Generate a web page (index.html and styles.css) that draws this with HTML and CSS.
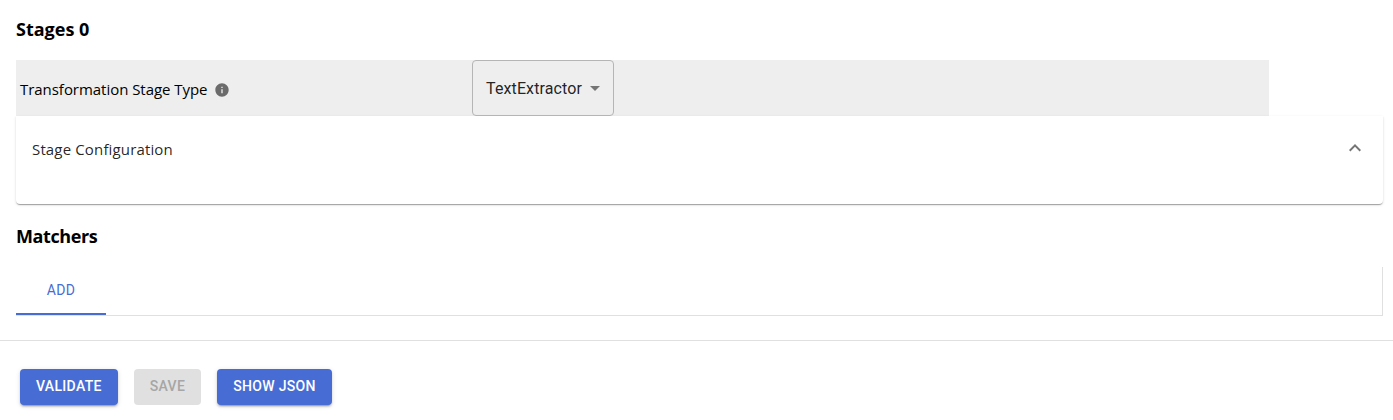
FILE: index.html
```html
<!doctype html>
<html lang="en">
    <head>
        <meta charset="UTF-8" />
        <meta name="viewport" content="width=device-width, initial-scale=1.0" />
        <title>Transformation</title>
        <link rel="stylesheet" href="styles.css">
    </head>
    <body>
        <main class="content">
            <h3 class="stages-title">Stages 0</h3>

            <div class="stage-type">
                <div class="stage-label">
                    <span>Transformation Stage Type</span>
                    <svg class="info-icon" viewBox="0 0 24 24">
                        <path d="M12 2C6.48 2 2 6.48 2 12s4.48 10 10 10 10-4.48 10-10S17.52 2 12 2zm1 15h-2v-6h2v6zm0-8h-2V7h2v2z" />
                    </svg>
                </div>
                <div class="select" role="button" tabindex="0">
                    <span>TextExtractor</span>
                    <svg class="icon" viewBox="0 0 24 24">
                        <path d="M7 10l5 5 5-5z" />
                    </svg>
                </div>
            </div>

            <section class="accordion">
                <div class="accordion-summary">
                    <span class="accordion-title">Stage Configuration</span>
                    <svg class="icon" viewBox="0 0 24 24">
                        <path d="M12 8l-6 6 1.41 1.41L12 10.83l4.59 4.58L18 14z" />
                    </svg>
                </div>
            </section>

            <h3 class="matchers-title">Matchers</h3>

            <div class="tabs">
                <button class="tab">Add</button>
            </div>
        </main>

        <footer class="actions">
            <button class="btn">Validate</button>
            <button class="btn" disabled>Save</button>
            <button class="btn">Show JSON</button>
        </footer>
    </body>
</html>
```
FILE: styles.css
```css
* {
    box-sizing: border-box;
}
body {
    margin: 0;
    font-family: "Segoe UI", "Open Sans", sans-serif;
    font-size: 16px;
    color: #000;
    background-color: #fff;
}
h3 {
    margin: 0;
    font-size: 18px;
    line-height: 24px;
    font-weight: 700;
}
.content {
    height: 340px;
    padding: 17px 10px 0 16px;
}
.stages-title {
    margin-bottom: 19px;
    letter-spacing: 0;
}
.stage-type {
    display: flex;
    width: 1253px;
    height: 56px;
    background-color: #eee;
}
.stage-label {
    display: flex;
    align-items: center;
    width: 456px;
    padding: 2px 0 0 4px;
    font-size: 15px;
    letter-spacing: -0.04px;
}
.info-icon {
    width: 16px;
    height: 16px;
    margin: 2px 0 0 6px;
    fill: #6b6b6b;
}
.icon {
    width: 24px;
    height: 24px;
    fill: #757575;
}
.select {
    display: flex;
    align-items: center;
    justify-content: space-between;
    width: 142px;
    padding: 0 6px 0 13px;
    border: 1px solid #b5b5b5;
    border-radius: 4px;
    font-family: Roboto, sans-serif;
    letter-spacing: 0.12px;
    color: rgba(0, 0, 0, 0.87);
}
.accordion {
    height: 88px;
    border-radius: 0 0 4px 4px;
    background-color: #fff;
    box-shadow:
        0 2px 1px -1px rgba(0, 0, 0, 0.2),
        0 1px 1px 0 rgba(0, 0, 0, 0.14),
        0 1px 3px 0 rgba(0, 0, 0, 0.12);
}
.accordion-summary {
    display: flex;
    align-items: center;
    justify-content: space-between;
    height: 64px;
    padding: 0 16px;
    font-size: 15px;
    letter-spacing: 0.15px;
    color: rgba(0, 0, 0, 0.87);
}
.accordion-title {
    padding-top: 2px;
}
.matchers-title {
    margin: 20px 0 19px;
    letter-spacing: -0.4px;
}
.tabs {
    height: 49px;
    border-right: 1px solid #e0e0e0;
    border-bottom: 1px solid #e0e0e0;
}
.tab {
    width: 90px;
    height: 48px;
    padding: 0;
    border: none;
    border-bottom: 2px solid #476dd5;
    background: none;
    font-family: Roboto, sans-serif;
    font-size: 14px;
    letter-spacing: 0.4px;
    text-transform: uppercase;
    color: #476dd5;
    cursor: pointer;
}
.actions {
    display: flex;
    gap: 16px;
    padding: 28px 20px 15px;
    border-top: 1px solid #e0e0e0;
}
.btn {
    height: 36px;
    padding: 0 16px 2px;
    border: none;
    border-radius: 4px;
    background-color: #476dd5;
    font-family: Roboto, sans-serif;
    font-size: 14px;
    font-weight: 500;
    letter-spacing: 0.32px;
    text-transform: uppercase;
    color: #fff;
    box-shadow:
        0 3px 1px -2px rgba(0, 0, 0, 0.2),
        0 2px 2px 0 rgba(0, 0, 0, 0.14),
        0 1px 5px 0 rgba(0, 0, 0, 0.12);
    cursor: pointer;
}
.btn:disabled {
    background-color: #e0e0e0;
    color: #a6a6a6;
    box-shadow: none;
    cursor: default;
}
```
